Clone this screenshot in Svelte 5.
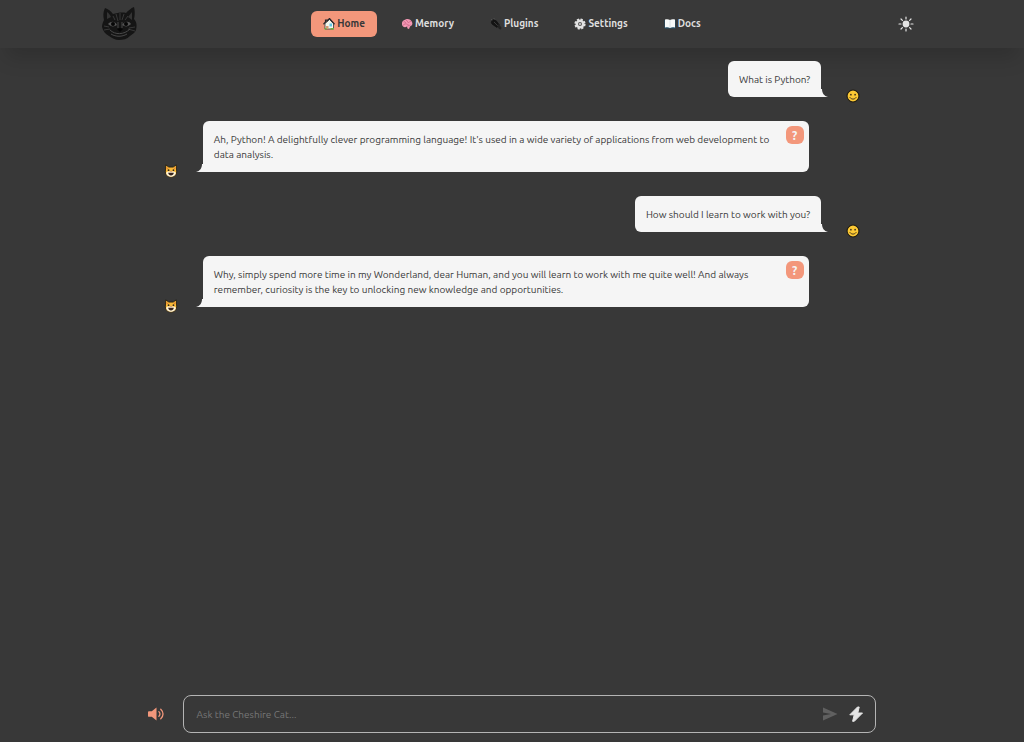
<script>
	const links = [
		{ icon: 'home', label: 'Home' },
		{ icon: 'brain', label: 'Memory' },
		{ icon: 'plug', label: 'Plugins' },
		{ icon: 'gear', label: 'Settings' },
		{ icon: 'book', label: 'Docs' }
	];

	let active = $state('Home');
	let draft = $state('');
	let messages = $state([
		{ from: 'user', text: 'What is Python?' },
		{
			from: 'bot',
			text: "Ah, Python! A delightfully clever programming language! It's used in a wide variety of applications from web development to data analysis."
		},
		{ from: 'user', text: 'How should I learn to work with you?' },
		{
			from: 'bot',
			text: 'Why, simply spend more time in my Wonderland, dear Human, and you will learn to work with me quite well! And always remember, curiosity is the key to unlocking new knowledge and opportunities.'
		}
	]);

	function send(event) {
		event.preventDefault();
		if (!draft.trim()) return;
		messages.push({ from: 'user', text: draft });
		draft = '';
	}
</script>

{#snippet navIcon(name)}
	<svg class="nav-icon" viewBox="0 0 24 24" aria-hidden="true">
		{#if name === 'home'}
			<path d="M4 11v11h17V11l-8-8z" fill="#f3f6ec" stroke="#26323a" stroke-width="1.5" />
			<path d="M1 12.5 5 8V4h3v2l5-5 10 11.5" fill="none" stroke="#26262a" stroke-width="2.4" />
			<path d="M6 16h5v6H6z" fill="#d39b72" />
			<path d="M13 11h5v6h-5z" fill="#62c4e4" />
			<path d="M3 20h4v3H3zM15 20h7v3h-7z" fill="#6faf45" />
		{:else if name === 'brain'}
			<path d="M2 13C1 8 4 4 9 3c5-2 11 0 13 5 2 4 0 8-4 9l-2 5-3-1-1-4c-4 3-9 1-10-4z" fill="#f398b4" />
			<path d="M5 8c3-2 5 1 3 3M10 4c4 1 2 5 5 5s2-4 5-2M4 14c3 0 3-3 7-2s4 4 8 2M12 17c1-2 3-2 4-1" fill="none" stroke="#c55c80" stroke-width="1.4" />
		{:else if name === 'plug'}
			<path d="m3 3 4 4M8 1l3 4" stroke="#6b6b6b" stroke-width="2" />
			<path d="M3 7c2-4 6-5 9-2l7 9-5 5-9-6C3 11 2 9 3 7z" fill="#141414" stroke="#090909" />
			<path d="m14 15 3-3 6 7-1 4-4-1z" fill="#222" />
			<path d="m8 8 7 7" stroke="#555" stroke-width="1.2" />
		{:else if name === 'gear'}
			<circle cx="12" cy="12" r="9" fill="none" stroke="#e2e2e2" stroke-width="4.5" stroke-dasharray="4.2 2.87" />
			<circle cx="12" cy="12" r="6.5" fill="#555" stroke="#e2e2e2" stroke-width="5" />
			<circle cx="12" cy="12" r="2" fill="#ddd" />
		{:else}
			<path d="M1 4h22v17H1z" fill="#25516a" />
			<path d="M2 3c4-1 7-1 10 1 3-2 6-2 10-1v16c-4-1-7-1-10 1-3-2-6-2-10-1z" fill="#f7fafa" />
			<path d="M12 4v16" stroke="#b9c9d1" stroke-width="1" />
		{/if}
	</svg>
{/snippet}

<div class="app">
	<header>
		<a class="logo" href="/" aria-label="Cheshire Cat">
			<svg viewBox="0 0 36 34" aria-hidden="true">
				<path d="M3 1c3 1 6 3 8 6 4-1 9-2 13-1 2-2 5-5 8-6 1 4 1 8 0 12 3 3 3 7 2 11-1 3-4 4-6 6-3 3-7 4-11 4-4 0-7-2-10-4-4-2-6-5-7-9 0-3 1-5 2-7C1 9 1 5 3 1z" fill="#151515" />
				<path d="M5 5c2 1 3 3 4 5l-4 2zM30 5l-4 5 4 3z" fill="#343434" />
				<path d="m14 7 2 7M18 6v7M22 7l-2 6M11 9l2 4M26 9l-3 4M2 19l5 1M2 23l6-1M33 20l-6 1M33 24l-7-2" stroke="#383838" fill="none" />
				<path d="M6 17c3-3 7-3 9 1-3 2-6 2-9-1zM20 18c3-4 7-4 9-1-3 3-6 3-9 1z" fill="#555" />
				<circle cx="11" cy="17" r="2" fill="#060606" />
				<circle cx="24" cy="17" r="2" fill="#060606" />
				<path d="M16 15v6M20 15v6M8 23c5 5 14 5 20-1M9 27c5 3 11 3 16 0" stroke="#484848" fill="none" />
				<path d="m15 22 3-1 3 1-3 3z" fill="#050505" />
			</svg>
		</a>
		<nav>
			{#each links as link}
				<a href="#{link.label.toLowerCase()}" class:active={active === link.label} onclick={() => (active = link.label)}>
					{@render navIcon(link.icon)}
					{link.label}
				</a>
			{/each}
		</nav>
		<button class="icon-button theme" aria-label="Toggle theme">
			<svg viewBox="0 0 16 16" aria-hidden="true">
				<circle cx="8" cy="8" r="3.4" fill="currentColor" />
				<path d="M8 1v2M8 13v2M1 8h2M13 8h2M3 3l1.4 1.4M11.6 11.6 13 13M3 13l1.4-1.4M11.6 4.4 13 3" stroke="currentColor" stroke-width="1.2" stroke-linecap="round" />
			</svg>
		</button>
	</header>

	<main>
		{#each messages as message}
			<div class="message {message.from}">
				<svg class="avatar" viewBox="0 0 16 16" aria-hidden="true">
					{#if message.from === 'user'}
						<circle cx="8" cy="8" r="6.8" fill="#fcc934" stroke="#1f1b12" stroke-width="1.2" />
						<circle cx="5.6" cy="6.5" r="1" fill="#40311b" />
						<circle cx="10.4" cy="6.5" r="1" fill="#40311b" />
						<path d="M4.5 9.8c2 2.4 5 2.4 7 0" fill="none" stroke="#40311b" stroke-width="1.1" stroke-linecap="round" />
					{:else}
						<path d="m2 1 3.5 2.5h5L14 1l.5 8c0 3.5-3 6-6.5 6s-6.5-2.500-6.500-6z" fill="#f8b937" stroke="#241d12" />
						<path d="m3 3 2 2-2 1zM13 3l-2 2 2 1z" fill="#e47a35" />
						<path d="M2.500 10c1-2 4-1 5.500-2 1.500 1 4.500 0 5.500 2 0 3-3 4.500-5.500 4.500S2.500 13 2.500 10z" fill="#fff3d5" />
						<circle cx="5.200" cy="7" r="1" fill="#30251b" />
						<circle cx="10.800" cy="7" r="1" fill="#30251b" />
						<path d="M4.800 10h6.400c-.2 2-1.600 3-3.200 3s-3-1-3.200-3z" fill="#35231d" />
						<path d="M7 8.300h2l-1 1z" fill="#a34b35" />
					{/if}
				</svg>
				<div class="bubble">
					<p>{message.text}</p>
					<svg class="tail" viewBox="0 0 8 8" aria-hidden="true"><path d="M8 0v8H0c4-1 6-4 6-8z" fill="#f5f5f5" /></svg>
					{#if message.from === 'bot'}
						<button class="why" aria-label="Why this answer?">?</button>
					{/if}
				</div>
			</div>
		{/each}
	</main>

	<form onsubmit={send}>
		<button type="button" class="icon-button sound" aria-label="Toggle sound">
			<svg viewBox="0 0 18 16" aria-hidden="true">
				<path d="M1 5h3l5-4v14l-5-4H1Q0 11 0 10V6Q0 5 1 5z" fill="currentColor" />
				<path d="M11.500 5.500c1.500 1.500 1.500 3.500 0 5M13.500 3c3.200 3 3.200 7 0 10" fill="none" stroke="currentColor" stroke-width="1.400" stroke-linecap="round" />
			</svg>
		</button>
		<div class="field">
			<input type="text" aria-label="Message" placeholder="Ask the Cheshire Cat..." bind:value={draft} />
			<button type="submit" class="icon-button send" aria-label="Send" disabled={!draft}>
				<svg viewBox="0 0 16 16" aria-hidden="true"><path d="M1 1.500 15.500 8 1 14.500V9.500L9 8 1 6.500z" fill="currentColor" /></svg>
			</button>
			<button type="button" class="icon-button bolt" aria-label="Quick actions">
				<svg viewBox="0 0 16 16" aria-hidden="true"><path d="M9.500 1 1.800 8.800h4.400L4.600 15.300h1.700L14.500 7h-4.700l1.400-6z" fill="currentColor" stroke="currentColor" stroke-linejoin="round" /></svg>
			</button>
		</div>
	</form>
</div>

<style>
	:global(body) {
		background: #383838;
	}

	.app {
		display: flex;
		flex-direction: column;
		height: 100vh;
		color: #383838;
		font-family: Ubuntu, 'Noto Sans', sans-serif;
		font-size: 10px;
		line-height: 15px;
	}

	header {
		display: grid;
		grid-template-columns: 1fr auto 1fr;
		align-items: center;
		height: 48px;
		padding: 0 10%;
		background: #393939;
		box-shadow: 0 16px 20px -6px rgba(0, 0, 0, 0.15);
	}

	.logo svg {
		display: block;
		width: 36px;
		height: 34px;
	}

	nav {
		display: flex;
		gap: 12px;
	}

	nav a {
		display: flex;
		align-items: center;
		gap: 2px;
		padding: 6px 12px;
		border-radius: 6px;
		color: #dedede;
		font-size: 10px;
		font-weight: 600;
		line-height: 14px;
		text-decoration: none;
	}

	nav a.active {
		background: #f3977b;
		color: #383838;
	}

	.nav-icon {
		width: 12px;
		height: 12px;
	}

	.icon-button {
		display: block;
		padding: 0;
		border: none;
		background: none;
		color: #e5e5e5;
		cursor: pointer;
	}

	.icon-button svg {
		display: block;
		width: 16px;
		height: 16px;
	}

	.theme {
		justify-self: end;
		margin-right: 8px;
	}

	main {
		display: flex;
		flex: 1;
		flex-direction: column;
		gap: 24px;
		width: 68%;
		min-height: 0;
		margin: 0 auto;
		padding-top: 13px;
		overflow-y: auto;
	}

	.message {
		display: flex;
		align-items: flex-end;
		gap: 25px;
	}

	.message.user {
		flex-direction: row-reverse;
	}

	.avatar {
		flex: none;
		width: 14px;
		height: 14px;
		margin-bottom: -6px;
	}

	.bubble {
		position: relative;
		max-width: 87%;
		padding: 11px 11px 10px;
		box-sizing: border-box;
		border-radius: 6px;
		background: #f5f5f5;
	}

	.user .bubble {
		border-bottom-right-radius: 0;
	}

	.bot .bubble {
		padding-right: 28px;
		border-bottom-left-radius: 0;
	}

	.bubble p {
		margin: 0;
	}

	.tail {
		position: absolute;
		bottom: 0;
		left: -7px;
		width: 8px;
		height: 8px;
	}

	.user .tail {
		right: -7px;
		left: auto;
		transform: scaleX(-1);
	}

	.why {
		position: absolute;
		top: 5px;
		right: 5px;
		width: 18px;
		height: 18px;
		padding: 0;
		border: none;
		border-radius: 6px;
		background: #f3977b;
		color: #f5f5f5;
		font: inherit;
		font-size: 12px;
		font-weight: 700;
		cursor: pointer;
	}

	form {
		display: flex;
		align-items: center;
		gap: 18px;
		width: 71%;
		margin: 0 auto;
		padding-bottom: 9px;
	}

	.sound {
		color: #f3977b;
	}

	.sound svg {
		width: 17px;
	}

	.field {
		display: flex;
		flex: 1;
		align-items: center;
		gap: 10px;
		padding: 0 11px 0 12px;
		border: 1px solid #b4b4b4;
		border-radius: 8px;
	}

	input {
		flex: 1;
		min-width: 0;
		height: 36px;
		padding: 0;
		border: none;
		outline: none;
		background: none;
		color: #f5f5f5;
		font: inherit;
	}

	input::placeholder {
		color: #777;
		opacity: 1;
	}

	.send:disabled {
		color: #606060;
	}
</style>
